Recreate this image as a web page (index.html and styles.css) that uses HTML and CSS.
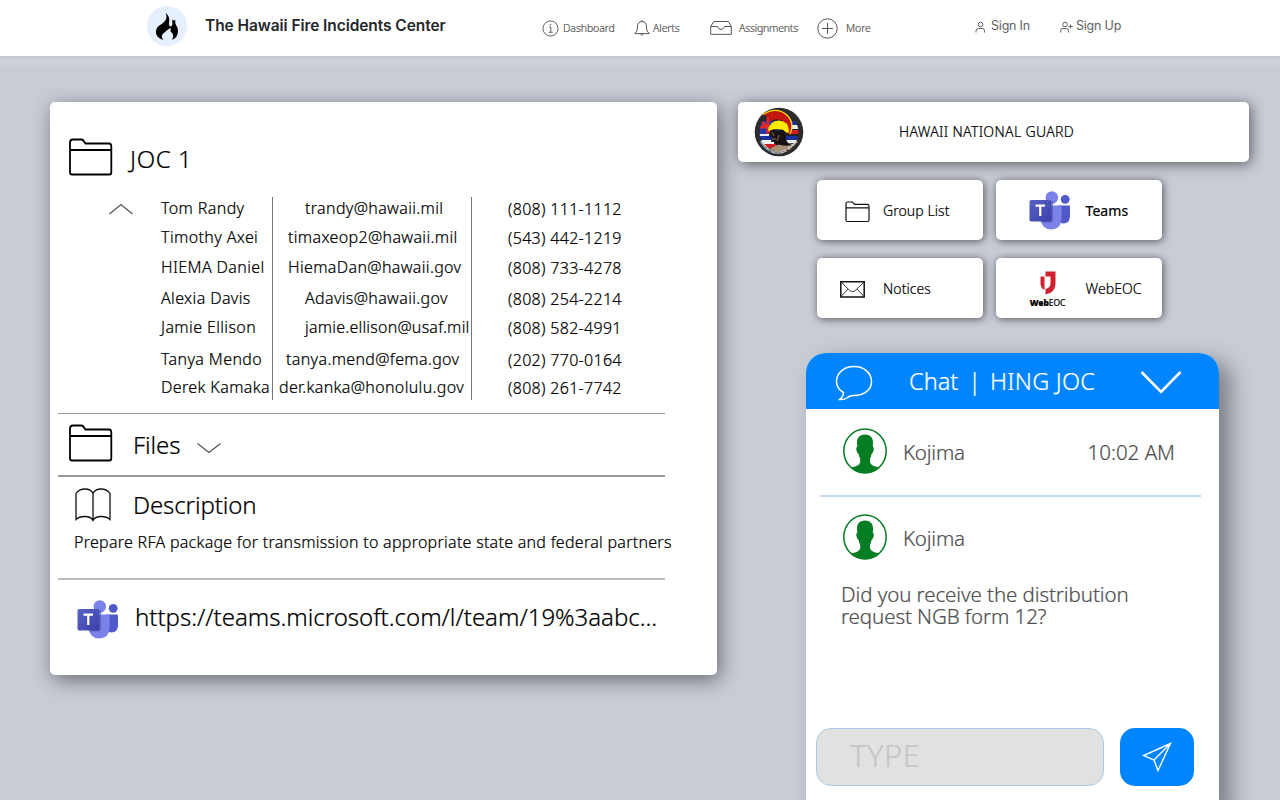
FILE: index.html
```html
<!DOCTYPE html>
<html lang="en">
<head>
<meta charset="utf-8">
<title>The Hawaii Fire Incidents Center</title>
<link rel="stylesheet" href="styles.css">
</head>
<body>
<svg class="defs" aria-hidden="true">
  <defs>
    <linearGradient id="tile" x1="0" y1="0" x2="1" y2="1"><stop offset="0" stop-color="#5a62c3"/><stop offset="1" stop-color="#3940ab"/></linearGradient>
    <symbol id="folder" viewBox="0 0 44 38"><g fill="none" stroke="currentColor" stroke-width="1.800"><path d="M1 34.500V4.500Q1 1.500 4 1.500H12.500Q14 1.500 15 3.500L16.500 5.500H40Q42.300 5.500 42.300 8.500V34.500Q42.300 36.500 40.300 36.500H3Q1 36.500 1 34.500Z"/><path d="M1 12H42.300"/></g></symbol>
    <symbol id="teams" viewBox="0 0 42 39"><circle cx="36.200" cy="8.300" r="4.400" fill="#5059c9"/><path d="M29 14.500H40Q41 14.500 41 15.500V25Q41 32.500 34 32.500L29 31Z" fill="#5059c9"/><circle cx="22.800" cy="6.500" r="6.300" fill="#7b83eb"/><path d="M12 14.500H31Q32.500 14.500 32.500 16V28Q32 38.500 22 38.500Q14 38.500 12 30Z" fill="#7b83eb"/><path d="M13 10H22.500Q24 10 24 12V29Q24 31.500 22 31.500H12Z" fill="#4a51aa" opacity=".65"/><rect x=".5" y="9" width="21.800" height="21.500" rx="1.800" fill="url(#tile)"/><path d="M6.500 14.700H16M11.250 14.700V25" stroke="#fff" stroke-width="2.200"/></symbol>
    <symbol id="person" viewBox="0 0 44 46"><ellipse cx="22" cy="23" rx="21.200" ry="22" fill="#fff" stroke="#057d22" stroke-width="1.500"/><path d="M22 6.500C27.500 6.500 30.200 10 30 15L29.800 18.500Q31.800 20 30 24Q29.300 26 28.500 26Q28.200 29 27 30.500V34.500Q28.500 38.500 37 39.500Q31 45 22 45Q13 45 7.500 39.500Q16 38.500 17.200 34.500V30.500Q16 29 15.700 26Q14.800 26 14.100 24Q12.300 20 14.300 18.500L14 15C13.800 10 16.500 6.500 22 6.500Z" fill="#057d22"/></symbol>
  </defs>
</svg>

<header class="topbar">
  <div class="brand">
    <span class="brand-logo"><svg width="24" height="30" viewBox="0 0 24 30"><path d="M10.500 1C15 4 14.500 8 14 11.500C13.500 14 15.500 15.500 17 13.500C18 12 17 10 17.200 7.500C18 8.500 20 8.500 20.500 8.300C19.500 12 21.500 13 22.500 16C24 21 22 26 17 28C19 24 18.500 22 15.500 19.500C16 18 15.500 17 15.500 16C12 17.500 11 19.500 9.500 20.500C6.500 22.500 6 25 8.500 28C3 26.500 0 22.500 1.200 18C2.500 13.500 6 13 9 10C12 7 12 4 10.500 1Z"/></svg></span>
    <span class="brand-name">The Hawaii Fire Incidents Center</span>
  </div>
  <nav class="nav">
    <a class="nav-item nav-dashboard"><svg width="17" height="17" viewBox="0 0 18 18"><circle cx="9" cy="9" r="8"/><path d="M7.500 7.500H9.300V13M7.300 13H11.300"/><circle cx="9" cy="5" r=".4"/></svg><span>Dashboard</span></a>
    <a class="nav-item nav-alerts"><svg width="16" height="18" viewBox="0 0 16 18"><path d="M.8 14.600H15.200Q12.500 12.500 12.500 9V7Q12.300 3 8 2.500Q3.700 3 3.500 7V9Q3.500 12.500 .8 14.600ZM8 2.500V1M6.500 15Q8 17.500 9.500 15"/></svg><span>Alerts</span></a>
    <a class="nav-item nav-assign"><svg width="22" height="16" viewBox="0 0 22 16"><path d="M.7 6.500V14.300H21.300V6.500L18.300 1.500H3.700ZM.7 6.500H7.500Q8.500 9.500 11 9.500Q13.500 9.500 14.500 6.500H21.300"/></svg><span>Assignments</span></a>
    <a class="nav-item nav-more"><svg width="21" height="21" viewBox="0 0 21 21"><circle cx="10.500" cy="10.500" r="9.700"/><path d="M5 10.500H16M10.500 5V16"/></svg><span>More</span></a>
  </nav>
  <div class="auth">
    <a class="auth-item"><svg width="11" height="12" viewBox="0 0 11 12"><circle cx="5.500" cy="3.500" r="2.300"/><path d="M1 11.500V9.800Q1 7.500 3.500 7.500H7.500Q9.500 7.500 9.500 9.800V11.500"/></svg><span>Sign In</span></a>
    <a class="auth-item auth-up"><svg width="13" height="12" viewBox="0 0 13 12"><circle cx="5" cy="3.500" r="2.300"/><path d="M.7 11.500V9.800Q.7 7.500 3 7.500H6.500Q8.700 7.500 8.700 9.800V11.500M8.500 5.500H12.700M10.600 3.400V7.600"/></svg><span>Sign Up</span></a>
  </div>
</header>
<div class="strip"></div>

<main class="board">
  <section class="panel joc">
    <div class="joc-head"><svg class="folder-big"><use href="#folder"/></svg><h1 class="title title-joc">JOC 1</h1></div>
    <div class="contacts">
      <svg class="chev-up" width="26" height="12" viewBox="0 0 26 12"><path d="M1.500 11L13 1.500L24.500 11"/></svg>
      <div class="col names"><span>Tom Randy</span><span>Timothy Axei</span><span>HIEMA Daniel</span><span>Alexia Davis</span><span>Jamie Ellison</span><span>Tanya Mendo</span><span>Derek Kamaka</span></div>
      <div class="col emails"><span class="in-5">trandy@hawaii.mil</span><span class="in-3">timaxeop2@hawaii.mil</span><span class="in-3">HiemaDan@hawaii.gov</span><span class="in-5">Adavis@hawaii.gov</span><span class="in-5 tight">jamie.ellison@usaf.mil</span><span class="in-2">tanya.mend@fema.gov</span><span class="in-1">der.kanka@honolulu.gov</span></div>
      <div class="col phones"><span>(808) 111-1112</span><span>(543) 442-1219</span><span>(808) 733-4278</span><span>(808) 254-2214</span><span>(808) 582-4991</span><span>(202) 770-0164</span><span>(808) 261-7742</span></div>
    </div>
    <div class="files"><svg class="folder-big"><use href="#folder"/></svg><h2 class="title title-files">Files</h2><svg class="chev-down" width="26" height="12" viewBox="0 0 26 12"><path d="M1.500 1.500L13 10.500L24.500 1.500"/></svg></div>
    <div class="description">
      <div class="desc-head"><svg width="36" height="34" viewBox="0 0 36 34"><path d="M18 5.500Q16 1 10 1Q4 1 1 5.500V31.500Q4 28.500 10 28.500Q16 28.500 18 32.500Q20 28.500 26 28.500Q32 28.500 35 31.500V5.500Q32 1 26 1Q20 1 18 5.500ZM18 5.500V32.500" fill="none" stroke="#111" stroke-width="1.300"/></svg><h2 class="title title-desc">Description</h2></div>
      <p class="desc-text">Prepare RFA package for transmission to appropriate state and federal partners</p>
    </div>
    <div class="link-row"><svg class="teams"><use href="#teams"/></svg><a class="title title-url">https://teams.microsoft.com/l/team/19%3aabc...</a></div>
  </section>

  <aside class="side">
    <div class="panel guard">
      <svg class="seal" width="50" height="50" viewBox="0 0 50 50"><defs><clipPath id="disc"><circle cx="25" cy="25" r="19.500"/></clipPath></defs><circle cx="25" cy="25" r="24.300" fill="#2a2c2e"/><g clip-path="url(#disc)"><path d="M0 0H50V50H0Z" fill="#242226"/><path d="M5 14H24V28H5Z" fill="#2537a0"/><path d="M3 10L21 28M3 20H24M14 8V28" stroke="#e3252c" stroke-width="3"/><path d="M35 18H50V22H35ZM3 33H20V38H3ZM5 27H17V30H5Z" fill="#f0edf2"/><path d="M34 23H50V27H34ZM10 37H22V41H10Z" fill="#d01b23"/><path d="M3 29H18V33H3ZM32 29H50V33H32ZM36 14H50V18H36Z" fill="#1930a0"/><path d="M32 33H50V36H32Z" fill="#f0edf2"/><path d="M12 44Q22 38 31 35L42 38V50H12Z" fill="#aa9074"/></g><path d="M9 8Q22-2 32 7Q41 15 36 27L33 26Q34 16 27 13Q19 11 14 16Q18 9 9 8Z" fill="#c3170f"/><path d="M9 7.500Q22-1 33 8Q41 16 36 27" fill="none" stroke="#f8df00" stroke-width="1.300"/><path d="M14 24Q15 14 25 13.500Q35 14 35 25Q33 27 29 23L23 22Z" fill="#ffed00"/><path d="M16 24Q20 20 25 25Q28 20 31 25Q31 32 34 36L38 38Q30 40 23 37Q22 34 17 35L18 30L15 29Z" fill="#171211"/><path d="M18 25L20 29M18 32H22M25 28L23 34" stroke="#6d5140" stroke-width="1.500"/><path id="rim" d="M4 32Q22 62 46 32" fill="none"/><text class="seal-text"><textPath href="#rim" startOffset="3">HAWAII NATIONAL GUARD</textPath></text></svg>
      <span class="guard-name">HAWAII NATIONAL GUARD</span>
    </div>
    <div class="tiles">
      <a class="panel tile tile-group"><svg class="tile-icon folder-small" width="26" height="22" viewBox="0 0 26 22"><path d="M1 19V2.500Q1 1 2.500 1H7.500L9.500 3.300H22.500Q24 3.300 24 5V19Q24 20.500 22.500 20.500H2.500Q1 20.500 1 19ZM1 6.800H24" fill="none" stroke="#111" stroke-width="1.200"/></svg><span class="tile-label">Group List</span></a>
      <a class="panel tile tile-teams"><svg class="tile-icon teams"><use href="#teams"/></svg><span class="tile-label">Teams</span></a>
      <a class="panel tile tile-notices"><svg class="tile-icon" width="25" height="17" viewBox="0 0 25 17"><path d="M.8.8H24.200V15.900H.8Z" fill="none" stroke="#111" stroke-width="1.500"/><path d="M1 1L9 8.800Q12.500 12.500 16 8.800L24 1M1 15.500L8 8M24 15.500L17 8" fill="none" stroke="#222" stroke-width=".9"/></svg><span class="tile-label">Notices</span></a>
      <a class="panel tile tile-eoc"><span class="eoc-logo"><svg width="16" height="24" viewBox="0 0 16 24"><path d="M5.500 .5H15.500V13Q15 22 5.500 23.500V18Q10.500 17 10.500 12V5.500H5.500ZM.5 5.500H4.500V19Q1 17.500 .5 13Z" fill="#d3202f"/></svg><span class="eoc-word"><b>Web</b>EOC</span></span><span class="tile-label">WebEOC</span></a>
    </div>
    <section class="chat">
      <div class="chat-head"><svg class="bubble" width="38" height="36" viewBox="0 0 38 36"><path d="M19 1.500C29 1.500 36.500 8 36.500 16.500C36.500 25 29 30.500 19 30.500C15 30.500 14 31 12.500 32.500Q9 35 4.500 34.500Q8.500 31.500 8.500 27.500C4 25 1.500 21 1.500 16.500C1.500 8 9 1.500 19 1.500Z" fill="none" stroke="#fff" stroke-width="1.500"/></svg><span class="chat-title">Chat</span><span class="chat-title chat-bar">|</span><span class="chat-title chat-room">HING JOC</span><svg class="chat-chev" width="42" height="26" viewBox="0 0 42 26"><path d="M1.500 2L21 22L40.500 2" fill="none" stroke="#fff" stroke-width="2.600"/></svg></div>
      <div class="chat-row"><svg class="avatar"><use href="#person"/></svg><span class="who">Kojima</span><span class="time">10:02 AM</span></div>
      <div class="chat-row chat-row-last"><svg class="avatar"><use href="#person"/></svg><span class="who">Kojima</span></div>
      <p class="message">Did you receive the distribution<br>request NGB form 12?</p>
      <div class="composer"><div class="field">TYPE</div><div class="send"><svg width="30" height="30" viewBox="0 0 30 30"><path d="M28.500 1.500L1.500 13.500L12 18L16 28.500ZM28.500 1.500L12 18" fill="none" stroke="#fff" stroke-width="1.400"/></svg></div></div>
    </section>
  </aside>
</main>
</body>
</html>
```
FILE: styles.css
```css
* { box-sizing: border-box; }
html, body { margin: 0; height: 800px; overflow: hidden; }
body { background: #c8ccd5; font-family: "Noto Sans", "Open Sans", sans-serif; color: #000; font-weight: 300; -webkit-text-stroke: .22px currentColor; }
h1, h2, p { margin: 0; font-weight: inherit; }
svg { flex: none; display: block; }
.defs { position: absolute; width: 0; height: 0; }

.topbar { height: 56px; background: #fff; display: flex; align-items: flex-start; padding-left: 147px; }
.strip { height: 9px; background: linear-gradient(#c2c5cb, #ccd0d9 35%, #cdd1da); }
.brand { display: flex; width: 395px; padding-top: 6px; gap: 18px; }
.brand-logo { width: 40px; height: 40px; border-radius: 50%; background: #e5efff; display: flex; justify-content: center; padding-top: 6px; }
.brand-name { font: 600 15.500px/39px Inter, sans-serif; letter-spacing: -.07px; color: #24262a; white-space: nowrap; -webkit-text-stroke: 0; }
.nav { display: flex; width: 433px; height: 56px; align-items: center; color: #555; font-size: 10.500px; letter-spacing: -.1px; }
.nav svg { fill: none; stroke: #555; stroke-width: 1; }
.nav-item { display: flex; align-items: center; white-space: nowrap; }
.nav-dashboard { width: 92px; gap: 4px; }
.nav-alerts { width: 76px; gap: 3px; }
.nav-assign { width: 107px; gap: 7px; letter-spacing: -.2px; }
.nav-more { gap: 8px; }
.auth { display: flex; gap: 30px; font: 12.500px/16px Inter, sans-serif; letter-spacing: -.2px; color: #5d6064; padding-top: 18px; -webkit-text-stroke: 0; }
.auth-item { display: flex; gap: 5px; align-items: center; white-space: nowrap; }
.auth-up { gap: 3px; }
.auth-item svg { fill: none; stroke: #5d6064; stroke-width: 1; margin-top: 2px; }

.board { display: flex; align-items: flex-start; padding: 37px 31px 0 49.500px; gap: 21.500px; }
.panel { background: #fff; border-radius: 5px; }
.title { font-size: 24px; line-height: 32px; white-space: nowrap; color: #000; }
.joc { width: 667px; height: 572.500px; box-shadow: 3px 5px 20px rgba(0, 0, 0, .48); padding: 36px 0 0 8.500px; }
.joc-head { display: flex; padding-left: 11px; gap: 17px; height: 59px; }
.folder-big { width: 44px; height: 38px; color: #000; }
.title-joc { padding-top: 5px; letter-spacing: .6px; }
.contacts { display: flex; height: 203px; padding-left: 50px; font-size: 16px; line-height: 22px; letter-spacing: .38px; }
.chev-up { margin: 6px 27px 0 0; }
.chev-up path, .chev-down path { fill: none; stroke: #555; stroke-width: 1.300; }
.col { display: grid; grid-template-rows: 29px 30px 31px 29px 32px 28px 24px; align-items: start; white-space: nowrap; }
.names { width: 112px; border-right: 1px solid #777; }
.emails { width: 199px; border-right: 1px solid #777; letter-spacing: .35px; }
.tight { letter-spacing: .22px; }
.in-1 { padding-left: 6px; }
.in-2 { padding-left: 13px; }
.in-3 { padding-left: 15px; }
.in-5 { padding-left: 32px; }
.phones { padding: 1px 0 0 36px; letter-spacing: .3px; }
.files { display: flex; width: 607px; height: 64px; margin-top: 13px; border-top: 1px solid #999; border-bottom: 2px solid #999; padding: 10px 0 0 11px; }
.title-files { margin-left: 20px; padding-top: 5px; letter-spacing: -.1px; }
.chev-down { margin: 18px 0 0 16px; }
.description { width: 607px; height: 103px; border-bottom: 2px solid #bbb; padding: 11px 0 0 17px; }
.desc-head { display: flex; gap: 22px; height: 40px; }
.title-desc { padding-top: 1px; letter-spacing: -.1px; }
.desc-text { font-size: 16px; line-height: 28px; white-space: nowrap; letter-spacing: .27px; margin-left: -1px; }
.link-row { display: flex; align-items: center; height: 79px; padding-left: 19px; gap: 16px; }
.title-url { letter-spacing: -.02px; margin-top: -5px; }
.teams { width: 42px; height: 39px; }

.side { width: 511px; }
.guard { height: 60px; box-shadow: 2px 2px 14px rgba(0, 0, 0, .55); display: flex; align-items: center; padding-left: 16px; }
.guard-name { font-size: 14px; margin-left: 95px; white-space: nowrap; letter-spacing: .35px; margin-top: -1px; }
.seal-text { font: 700 3.600px "Noto Sans", sans-serif; fill: #eee; -webkit-text-stroke: 0; }
.tiles { display: grid; grid-template-columns: 166px 166px; grid-auto-rows: 60px; gap: 18px 12.500px; padding: 18px 0 0 79px; }
.tile { box-shadow: 1px 1px 8px rgba(0, 0, 0, .6); display: grid; align-items: center; font-size: 14px; white-space: nowrap; letter-spacing: .08px; }
.tile-group, .tile-notices { grid-template-columns: 66px 1fr; }
.tile-group .tile-icon { margin: 3px 0 0 28px; }
.tile-notices .tile-icon { margin: 2px 0 0 23px; }
.tile-teams, .tile-eoc { grid-template-columns: 90px 1fr; }
.tile-teams .tile-icon { margin-left: 33px; }
.tile-teams .tile-label { font-weight: 400; }
.eoc-logo { width: 38px; margin: 2px 0 0 33px; display: flex; flex-direction: column; align-items: center; }
.eoc-word { font-size: 8.500px; line-height: 10px; margin-top: 3px; font-weight: 400; letter-spacing: -.1px; }
.eoc-word b { font-weight: 900; }

.chat { width: 413px; height: 460px; margin: 35px 0 0 68px; border-radius: 20px 20px 0 0; background: #fff; box-shadow: 12px 8px 22px rgba(0, 0, 0, .38); overflow: hidden; color: #505050; }
.chat-head { height: 56px; background: #0085ff; display: flex; align-items: center; padding: 0 0 0 29px; color: #fff; }
.bubble { margin-top: 3px; }
.chat-title { font-size: 23.500px; line-height: 40px; margin-left: 36px; }
.chat-bar { margin-left: 10px; }
.chat-room { margin-left: 9px; letter-spacing: .25px; }
.chat-chev { margin-left: auto; margin-right: 37px; margin-top: 3px; }
.chat-row { display: flex; width: 381px; height: 87.500px; margin-left: 14px; border-bottom: 2px solid #c5daf2; padding: 19px 26px 0 22px; font-size: 20.500px; line-height: 48px; letter-spacing: -.2px; }
.chat-row-last { height: 86px; border: 0; padding-top: 17.500px; }
.avatar { width: 46px; height: 46px; }
.who { margin-left: 15px; }
.time { margin-left: auto; letter-spacing: 0; }
.message { font-size: 20.500px; line-height: 22px; padding: 0 0 0 35px; height: 145.500px; white-space: nowrap; letter-spacing: -.08px; }
.composer { display: flex; gap: 16px; padding-left: 10px; }
.field { width: 288px; height: 58px; border: 1px solid #a9c9e8; border-radius: 15px; background: #e1e1e1; font-size: 31px; line-height: 52px; letter-spacing: .5px; color: #c6c6c6; padding-left: 33px; }
.send { width: 74px; height: 58px; border-radius: 15px; background: #0085ff; display: flex; align-items: center; justify-content: center; }
```
